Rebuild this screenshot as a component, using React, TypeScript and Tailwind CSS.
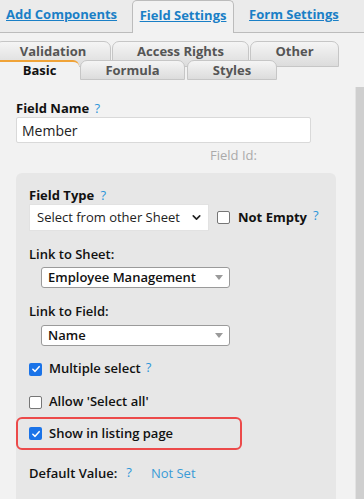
import { ChevronDown } from 'lucide-react';

function Help({ className = '' }: { className?: string }) {
  return <span className={'text-[#2d96d9] font-normal ' + className}>?</span>;
}

function Check({ checked }: { checked: boolean }) {
  if (checked) {
    return (
      <span className="w-[13px] h-[13px] rounded-[2px] bg-[#1a73e8] flex items-center justify-center shrink-0">
        <svg viewBox="0 0 12 12" className="w-[10px] h-[10px]">
          <path d="M2.2 6.3 L4.9 8.8 L9.8 3.2" fill="none" stroke="white" strokeWidth="1.8" strokeLinecap="round" strokeLinejoin="round" />
        </svg>
      </span>
    );
  }
  return <span className="block w-[13px] h-[13px] rounded-[2px] border border-[#767676] bg-white shrink-0" />;
}

function SubTab({ label, width, className = '' }: { label: string; width: string; className?: string }) {
  return (
    <div
      className={cn(
        'h-[26px] rounded-t-[7px] border border-[#c6c6c6] bg-gradient-to-b from-[#f5f5f5] to-[#dcdcdc] text-[#555] font-bold text-[13px] flex justify-center pt-[1px] leading-[17px] shrink-0',
        width,
        className
      )}
    >
      {label}
    </div>
  );
}

function cn(...parts: string[]) {
  return parts.filter(Boolean).join(' ');
}

export default function App() {
  return (
    <div className="w-[364px] h-[499px] overflow-hidden bg-[#f2f2f2] text-[13px] text-[#111] font-['Open_Sans',sans-serif]">
      {/* Top tabs */}
      <div className="h-[33px] bg-[#ebebeb] border-b border-[#bcbcbc] flex items-end">
        <div className="h-[32px] flex items-center pl-[6px] pb-[2px]">
          <span className="text-[#1a7fc6] font-bold underline">Add Components</span>
        </div>
        <div className="h-[33px] -mb-px ml-[15px] w-[102px] border border-b-0 border-[#bcbcbc] rounded-t-[5px] bg-[#f2f2f2] flex items-center justify-center pb-[2px]">
          <span className="text-[#1a7fc6] font-bold underline">Field Settings</span>
        </div>
        <div className="h-[32px] flex items-center ml-[15px] pb-[2px]">
          <span className="text-[#1a7fc6] font-bold underline">Form Settings</span>
        </div>
      </div>

      {/* Sub tabs */}
      <div className="pt-[8px]">
        <div className="h-[19px] flex">
          <SubTab label="Validation" width="w-[116px]" className="-ml-[5px]" />
          <SubTab label="Access Rights" width="w-[137px]" className="ml-[1px]" />
          <SubTab label="Other" width="w-[89px]" className="ml-[1px]" />
        </div>
        <div className="relative z-10 h-[20px] flex items-end">
          <div className="w-[79px] h-[21px] -mb-px bg-[#f2f2f2] border-t-2 border-[#f0a338] rounded-tr-[6px] flex justify-center font-bold text-[13px] text-[#111] leading-[17px]">
            Basic
          </div>
          <div className="ml-[1px] w-[105px] h-[20px] rounded-t-[7px] border border-[#c6c6c6] bg-gradient-to-b from-[#f5f5f5] to-[#dcdcdc] text-[#555] font-bold flex justify-center leading-[18px]">
            Formula
          </div>
          <div className="ml-[2px] w-[90px] h-[20px] rounded-t-[7px] border border-[#c6c6c6] bg-gradient-to-b from-[#f5f5f5] to-[#dcdcdc] text-[#555] font-bold flex justify-center leading-[18px]">
            Styles
          </div>
        </div>
      </div>

      {/* Content */}
      <div className="flex">
        <div className="flex-1 pl-[16px]">
          <div className="mt-[19px] h-[18px] leading-[18px] font-bold">
            Field Name <Help className="ml-[2px]" />
          </div>
          <div className="w-[295px] h-[26px] bg-white border border-[#d9d9d9] rounded-[2px] flex items-center pl-[5px] text-[14px] text-[#222]">
            Member
          </div>
          <div className="mt-[4px] h-[16px] leading-[16px] pl-[194px] text-[#aaa]">Field Id:</div>

          {/* Inner panel */}
          <div className="mt-[10px] w-[320px] h-[340px] bg-[#e7e7e7] rounded-[6px] pl-[13px] pt-[13px]">
            <div className="h-[18px] leading-[18px] font-bold">
              Field Type <Help className="ml-[3px]" />
            </div>
            <div className="flex items-center">
              <div className="w-[180px] h-[27px] bg-white border border-[#e2e2e2] flex items-center pl-[7px] pr-[5px] text-[#222]">
                <span className="flex-1">Select from other Sheet</span>
                <ChevronDown className="w-[13px] h-[13px] text-[#222]" strokeWidth={3} />
              </div>
              <span className="ml-[8px]">
                <Check checked={false} />
              </span>
              <span className="ml-[8px] font-bold">Not Empty</span>
              <Help className="ml-[6px] -mt-[4px]" />
            </div>

            <div className="mt-[14px] h-[18px] leading-[18px] font-semibold">Link to Sheet:</div>
            <div className="mt-[4px] ml-[12px] w-[189px] h-[21px] bg-white border border-[#9a9a9a] rounded-[3px] flex items-center pl-[6px] pr-[6px] font-semibold">
              <span className="flex-1">Employee Management</span>
              <span className="w-0 h-0 border-l-[4px] border-r-[4px] border-t-[5px] border-l-transparent border-r-transparent border-t-[#9a9a9a]" />
            </div>

            <div className="mt-[14px] h-[18px] leading-[18px] font-semibold">Link to Field:</div>
            <div className="mt-[5px] ml-[12px] w-[189px] h-[21px] bg-white border border-[#9a9a9a] rounded-[3px] flex items-center pl-[6px] pr-[6px] font-semibold">
              <span className="flex-1">Name</span>
              <span className="w-0 h-0 border-l-[4px] border-r-[4px] border-t-[5px] border-l-transparent border-r-transparent border-t-[#9a9a9a]" />
            </div>

            <div className="mt-[13px] h-[20px] flex items-center">
              <Check checked />
              <span className="ml-[7px] font-semibold">Multiple select</span>
              <Help className="ml-[5px] -mt-[3px]" />
            </div>
            <div className="mt-[13px] h-[20px] flex items-center">
              <Check checked={false} />
              <span className="ml-[7px] font-semibold">Allow 'Select all'</span>
            </div>
            <div className="mt-[5px] -ml-[13px] w-[226px] h-[33px] border-2 border-[#ec4a4a] rounded-[6px] flex items-center pl-[11px]">
              <Check checked />
              <span className="ml-[7px] font-semibold">Show in listing page</span>
            </div>
            <div className="mt-[14px] h-[20px] flex items-center">
              <span className="font-semibold">Default Value:</span>
              <Help className="ml-[9px] -mt-[2px]" />
              <span className="ml-[19px] text-[#3a9bd6]">Not Set</span>
            </div>
          </div>
        </div>
        <div className="w-[9px] mt-[7px] h-[420px] bg-[#cfcfcf] border-l border-[#e3e3e3]" />
      </div>
    </div>
  );
}
